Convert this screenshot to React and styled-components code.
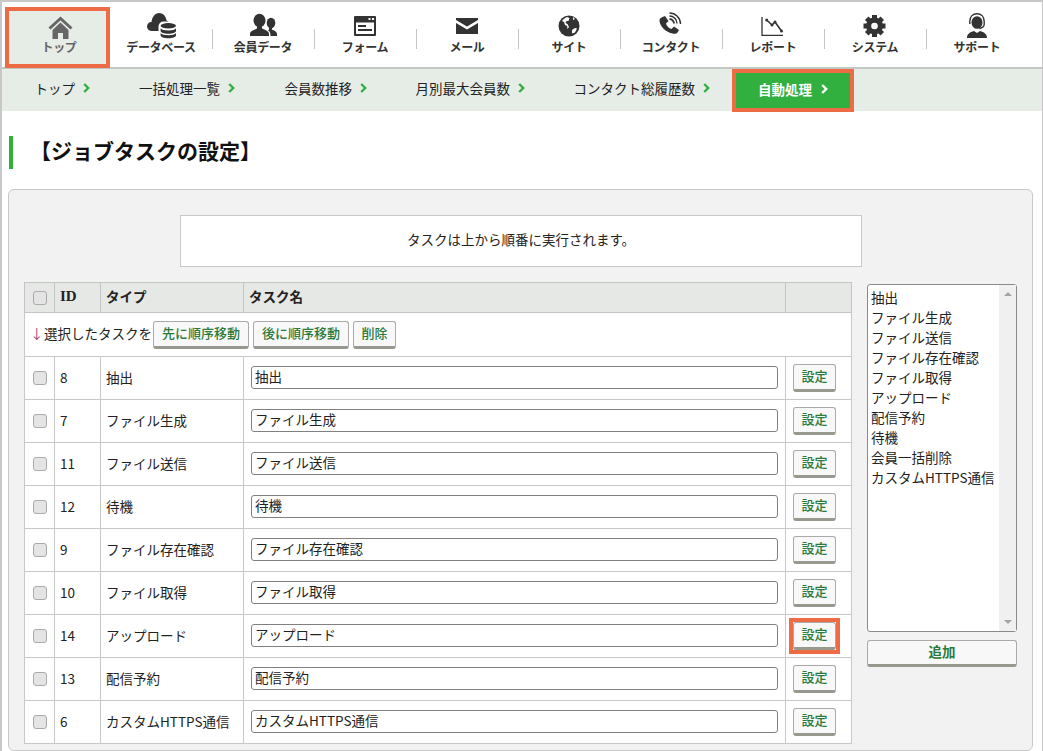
import React from "react";
import styled, { createGlobalStyle } from "styled-components";

const GlobalStyle = createGlobalStyle`
  html, body {
    margin: 0;
    padding: 0;
    background: #fff;
  }
  body {
    font-family: "Noto Sans CJK JP", "Liberation Sans", sans-serif;
    font-size: 13.5px;
    color: #222;
  }
  * {
    box-sizing: border-box;
  }
`;

const Page = styled.div`
  width: 1043px;
  height: 751px;
  overflow: hidden;
  border: 1px solid #c8c8c8;
  border-bottom: 0;
  border-top-width: 2px;
  border-left-width: 2px;
`;

const MainNav = styled.nav`
  display: flex;
  height: 67px;
  padding: 0 0 0 6px;
  border-bottom: 2px solid #c4c8c4;
`;

const NavItem = styled.a`
  position: relative;
  width: 102px;
  height: 61px;
  margin-top: 5px;
  display: flex;
  flex-direction: column;
  align-items: center;
  color: ${(p) => (p.$active ? "#666" : "#333")};
  background: ${(p) => (p.$active ? "#e6ece6" : "transparent")};
  font-size: 12px;
  font-weight: 700;
  letter-spacing: -0.3px;
  ${(p) =>
    p.$active &&
    `&::before {
      content: "";
      position: absolute;
      left: -3px;
      right: 0;
      top: 0;
      bottom: 0;
      border: 4px solid #ee6c45;
    }`}
  ${(p) =>
    p.$divider &&
    `&::after {
      content: "";
      position: absolute;
      right: -1px;
      top: 22px;
      height: 20px;
      width: 1px;
      background: #c4c4c4;
    }`}
  svg {
    display: block;
    margin-top: 5px;
    width: 34px;
    height: 29px;
    fill: currentColor;
  }
  span {
    line-height: 14px;
    margin-top: -1px;
  }
`;

const SubNav = styled.div`
  display: flex;
  align-items: flex-start;
  height: 42px;
  background: #e6ece6;
`;

const SubItem = styled.a`
  display: flex;
  align-items: center;
  justify-content: flex-end;
  gap: 8px;
  width: ${(p) => p.$w}px;
  height: 42px;
  padding-bottom: 5px;
  font-size: 13.5px;
  color: #222;
`;

const ActiveSub = styled.a`
  display: flex;
  align-items: center;
  justify-content: center;
  gap: 9px;
  margin-left: 22px;
  width: 122px;
  height: 43px;
  padding-bottom: 3px;
  background: #32b03f;
  border: 4px solid #ee6c45;
  color: #fff;
  font-size: 13.5px;
  font-weight: 700;
`;

const Chevron = styled.svg.attrs({ viewBox: "0 0 7 10" })`
  width: 7px;
  height: 10px;
  fill: none;
  stroke: ${(p) => p.$color || "#32b03f"};
  stroke-width: 2.4;
`;

const Heading = styled.h1`
  margin: 25px 0 20px 7px;
  height: 33px;
  border-left: 4px solid #32b03f;
  padding-left: 17px;
  font-size: 21px;
  line-height: 29px;
  font-weight: 700;
  color: #111;
`;

const Panel = styled.section`
  margin-left: 6px;
  width: 1025px;
  height: 562px;
  padding: 25px 15px 0;
  background: #f2f2f2;
  border: 1px solid #c8c8c8;
  border-radius: 6px;
`;

const Notice = styled.div`
  width: 682px;
  height: 52px;
  margin-left: 156px;
  padding-bottom: 4px;
  display: flex;
  align-items: center;
  justify-content: center;
  background: #fff;
  border: 1px solid #c8c8c8;
`;

const Columns = styled.div`
  display: flex;
  align-items: flex-start;
  gap: 15px;
  margin-top: 15px;
`;

const Table = styled.table`
  width: 827px;
  table-layout: fixed;
  border-collapse: collapse;
  background: #fff;
  col:nth-child(1) { width: 30px; }
  col:nth-child(2) { width: 46px; }
  col:nth-child(3) { width: 143px; }
  col:nth-child(4) { width: 542px; }
  col:nth-child(5) { width: 66px; }
`;

const Th = styled.th`
  height: 30px;
  padding: 0 5px ${(p) => (p.$check ? 0 : 3)}px;
  background: #e6e8e6;
  border: 1px solid #c4c4c4;
  text-align: left;
  font-size: ${(p) => (p.$serif ? 15 : 13.5)}px;
  font-weight: 700;
  font-family: ${(p) => (p.$serif ? '"Liberation Serif", serif' : "inherit")};
`;

const Td = styled.td`
  height: 43px;
  padding: 0 ${(p) => (p.$tight ? 7 : 5)}px ${(p) => (p.$text ? 3 : 0)}px;
  border: 1px solid #c8c8c8;
`;

const ActionCell = styled.td`
  height: 44px;
  padding: 0 0 0 7px;
  border: 1px solid #c8c8c8;
`;

const ActionRow = styled.div`
  display: flex;
  align-items: center;
  gap: 4px;
`;

const ActionLabel = styled.span`
  width: 117px;
  margin-bottom: 3px;
  white-space: nowrap;
`;

const Arrow = styled.span`
  display: inline-block;
  width: 14px;
  margin-left: -2px;
  color: #a0457c;
`;

const Check = styled.span`
  display: block;
  width: 14px;
  height: 14px;
  margin: 0 auto;
  background: #e4e4e4;
  border: 1px solid #aaa;
  border-radius: 3px;
`;

const Button = styled.button`
  display: block;
  height: 28px;
  width: ${(p) => p.$w}px;
  padding: 0 0 3px;
  background: #f8f8f8;
  border: 1px solid #aaa;
  border-bottom: 3px solid #969a8e;
  border-radius: 3px;
  color: #2a7a3a;
  font-family: inherit;
  font-size: 13px;
  font-weight: 500;
`;

const Highlight = styled.span`
  display: block;
  width: 43px;
  outline: 4px solid #ee6c45;
`;

const TextInput = styled.input`
  display: block;
  width: 527px;
  height: 23px;
  margin: 0 0 2px 2px;
  padding: 0 3px 2px;
  border: 1px solid #808080;
  border-radius: 3px;
  font-family: inherit;
  font-size: 13.5px;
  color: #222;
`;

const Side = styled.div`
  width: 150px;
  margin-top: 2px;
  flex: none;
`;

const ListBox = styled.div`
  position: relative;
  height: 348px;
  padding: 2px 0 0 3px;
  background: #fff;
  border: 1px solid #8a8a8a;
  border-radius: 3px;
  line-height: 20px;
`;

const ScrollTrack = styled.div`
  position: absolute;
  right: 0;
  top: 0;
  bottom: 0;
  width: 17px;
  background: #f0f0f0;
  &::before, &::after {
    content: "";
    position: absolute;
    left: 5px;
    border-left: 4px solid transparent;
    border-right: 4px solid transparent;
  }
  &::before {
    top: 7px;
    border-bottom: 4px solid #a4a4a4;
  }
  &::after {
    bottom: 7px;
    border-top: 4px solid #a4a4a4;
  }
`;

const AddButton = styled(Button)`
  width: 100%;
  margin-top: 8px;
  height: 27px;
  padding-bottom: 5px;
  font-size: 13.5px;
  font-weight: 700;
`;

const wave = { fill: "none", stroke: "currentColor" };

const icons = {
  home: (
    <>
      <path d="M7.500 16.500 18.500 6.500 29.500 16.500" fill="none" stroke="currentColor" strokeWidth="3" />
      <path d="M10.500 18 18.500 10.500 26.500 18V27H21V21H16V27H10.500z" />
    </>
  ),
  database: (
    <>
      <path d="M8 19C5 19 3 17 3 14.500 3 12 5 10 7.500 10 8 5 11 1 15 1 19 1 22 4 22.500 8.500 24.500 9 26 11 26 14V19z" />
      <rect x="14.500" y="9.500" width="19" height="18.500" rx="5" fill="#fff" />
      <ellipse cx="24.300" cy="13.800" rx="7.700" ry="2.700" />
      <path d="M16.600 16.300c1 1.500 4 2.200 7.700 2.200s6.700-.7 7.700-2.200v2.800c0 1.500-3.400 2.700-7.700 2.700s-7.700-1.200-7.700-2.700z" />
      <path d="M16.600 21c1 1.500 4 2.200 7.700 2.200S31 22.500 32 21v2.500c0 1.500-3.400 2.700-7.700 2.700s-7.700-1.200-7.700-2.700z" />
    </>
  ),
  members: (
    <>
      <ellipse cx="13.500" cy="8.500" rx="6" ry="6.800" />
      <path d="M4 24v-2c0-3 4-4 7-5.500v-3h5v3c3 1.500 7 2.500 7 5.500v2z" />
      <ellipse cx="25" cy="11" rx="4.300" ry="5.300" />
      <path d="M24.500 24H31v-2c0-2.500-3-3.500-5-4.500v-2h-3v2c-.5.300-1 .5-1 .7 2 1.300 2.500 3 2.500 5.800z" />
    </>
  ),
  form: (
    <>
      <path
        fillRule="evenodd"
        d="M7 4h20a1 1 0 0 1 1 1v18a1 1 0 0 1-1 1H7a1 1 0 0 1-1-1V5a1 1 0 0 1 1-1zM8 10.500V22h18V10.500zM20.500 6v2h2V6zM24 6v2h2V6z"
      />
      <path d="M10 13h8v2h-8zM10 17h14v2H10z" />
    </>
  ),
  mail: (
    <>
      <path d="M6 6h22v2L17 14.500 6 8z" />
      <path d="M6 11l11 6.500L28 11v11H6z" />
    </>
  ),
  site: (
    <>
      <circle cx="17" cy="14" r="10.500" />
      <path
        d="M15 5c-2 1-4 2-5 4l2 1 1 3 2 1 .5 3 1.500-2-1.500-3-2-1 1-2h2l1-3zM20 18l3-2 2 .5-2 4-3 1zM21 5l2 2-2 1z"
        fill="#fff"
      />
    </>
  ),
  contact: (
    <>
      <path d="M8.500 5 11 4l3.500 5L12 11.500c.5 2.500 3 5 5.500 5.500l2.500-2.500 5 3.500-1.500 2.500c-1 1.500-3 1.500-5 1C11 20 6 14 5.500 9c-.2-2 1-3.300 3-4z" />
      <path {...wave} strokeWidth="1.800" d="M15.500 7a4.500 4.500 0 0 1 4.500 4.500" />
      <path {...wave} strokeWidth="1.400" d="M15.500 4a7.500 7.500 0 0 1 7.500 7.500" />
      <path {...wave} strokeWidth="1.400" d="M15.500 1a11 11 0 0 1 11 11" />
    </>
  ),
  report: (
    <>
      <path {...wave} strokeWidth="1.300" d="M6 5V23.400H27" />
      <path {...wave} strokeWidth="1.600" d="M10.700 8 16 13 19 10 25.500 19" />
      <circle cx="10.700" cy="8" r="1.500" />
      <circle cx="16" cy="13" r="1.500" />
      <circle cx="19" cy="10" r="1.500" />
      <circle cx="25.500" cy="19" r="1.500" />
    </>
  ),
  system: (
    <>
      <circle cx="16.500" cy="14" r="8.500" />
      {[0, 45, 90, 135, 180, 225, 270, 315].map((a) => (
        <rect key={a} x="14" y="3" width="5" height="5" transform={`rotate(${a} 16.500 14)`} />
      ))}
      <circle cx="16.500" cy="14" r="3.300" fill="#fff" />
    </>
  ),
  support: (
    <>
      <ellipse cx="17" cy="10.500" rx="5.500" ry="6.300" />
      <path {...wave} strokeWidth="1.400" d="M9.800 12V9.500C9.800 4.500 13 1.700 17 1.700s7.200 2.800 7.200 7.800V12c0 2-2 4-5 4.500" />
      <path d="M7 26c0-4 3-6 7-7l3 2 3-2c4 1 7 3 7 7z" />
    </>
  ),
};

const nav = [
  ["トップ", icons.home],
  ["データベース", icons.database],
  ["会員データ", icons.members],
  ["フォーム", icons.form],
  ["メール", icons.mail],
  ["サイト", icons.site],
  ["コンタクト", icons.contact],
  ["レポート", icons.report],
  ["システム", icons.system],
  ["サポート", icons.support],
];

const subs = [
  ["トップ", 88],
  ["一括処理一覧", 145],
  ["会員数推移", 132],
  ["月別最大会員数", 158],
  ["コンタクト総履歴数", 185],
];

const rows = [
  [8, "抽出"],
  [7, "ファイル生成"],
  [11, "ファイル送信"],
  [12, "待機"],
  [9, "ファイル存在確認"],
  [10, "ファイル取得"],
  [14, "アップロード"],
  [13, "配信予約"],
  [6, "カスタムHTTPS通信"],
];

const options = ["抽出", "ファイル生成", "ファイル送信", "ファイル存在確認", "ファイル取得", "アップロード", "配信予約", "待機", "会員一括削除", "カスタムHTTPS通信"];

function App() {
  return (
    <Page>
      <GlobalStyle />
      <MainNav>
        {nav.map(([label, icon], i) => (
          <NavItem key={label} $active={i === 0} $divider={i > 0 && i < nav.length - 1}>
            <svg viewBox="0 0 34 29">{icon}</svg>
            <span>{label}</span>
          </NavItem>
        ))}
      </MainNav>
      <SubNav>
        {subs.map(([label, w]) => (
          <SubItem key={label} $w={w}>
            {label}
            <Chevron><path d="M1.200 1 5.200 5l-4 4" /></Chevron>
          </SubItem>
        ))}
        <ActiveSub>
          自動処理
          <Chevron $color="#fff"><path d="M1.200 1 5.200 5l-4 4" /></Chevron>
        </ActiveSub>
      </SubNav>
      <Heading>【ジョブタスクの設定】</Heading>
      <Panel>
        <Notice>タスクは上から順番に実行されます。</Notice>
        <Columns>
          <Table>
            <colgroup><col /><col /><col /><col /><col /></colgroup>
            <thead>
              <tr>
                <Th $check><Check /></Th>
                <Th $serif>ID</Th>
                <Th>タイプ</Th>
                <Th>タスク名</Th>
                <Th />
              </tr>
            </thead>
            <tbody>
              <tr>
                <ActionCell colSpan={5}>
                  <ActionRow>
                    <ActionLabel><Arrow>↓</Arrow>選択したタスクを</ActionLabel>
                    <Button $w={96}>先に順序移動</Button>
                    <Button $w={96}>後に順序移動</Button>
                    <Button $w={43}>削除</Button>
                  </ActionRow>
                </ActionCell>
              </tr>
              {rows.map(([id, name]) => (
                <tr key={id}>
                  <Td><Check /></Td>
                  <Td $text>{id}</Td>
                  <Td $text>{name}</Td>
                  <Td><TextInput defaultValue={name} /></Td>
                  <Td $tight>
                    {id === 14 ? (
                      <Highlight><Button $w={43}>設定</Button></Highlight>
                    ) : (
                      <Button $w={43}>設定</Button>
                    )}
                  </Td>
                </tr>
              ))}
            </tbody>
          </Table>
          <Side>
            <ListBox>
              {options.map((o) => <div key={o}>{o}</div>)}
              <ScrollTrack />
            </ListBox>
            <AddButton>追加</AddButton>
          </Side>
        </Columns>
      </Panel>
    </Page>
  );
}

export default App;
